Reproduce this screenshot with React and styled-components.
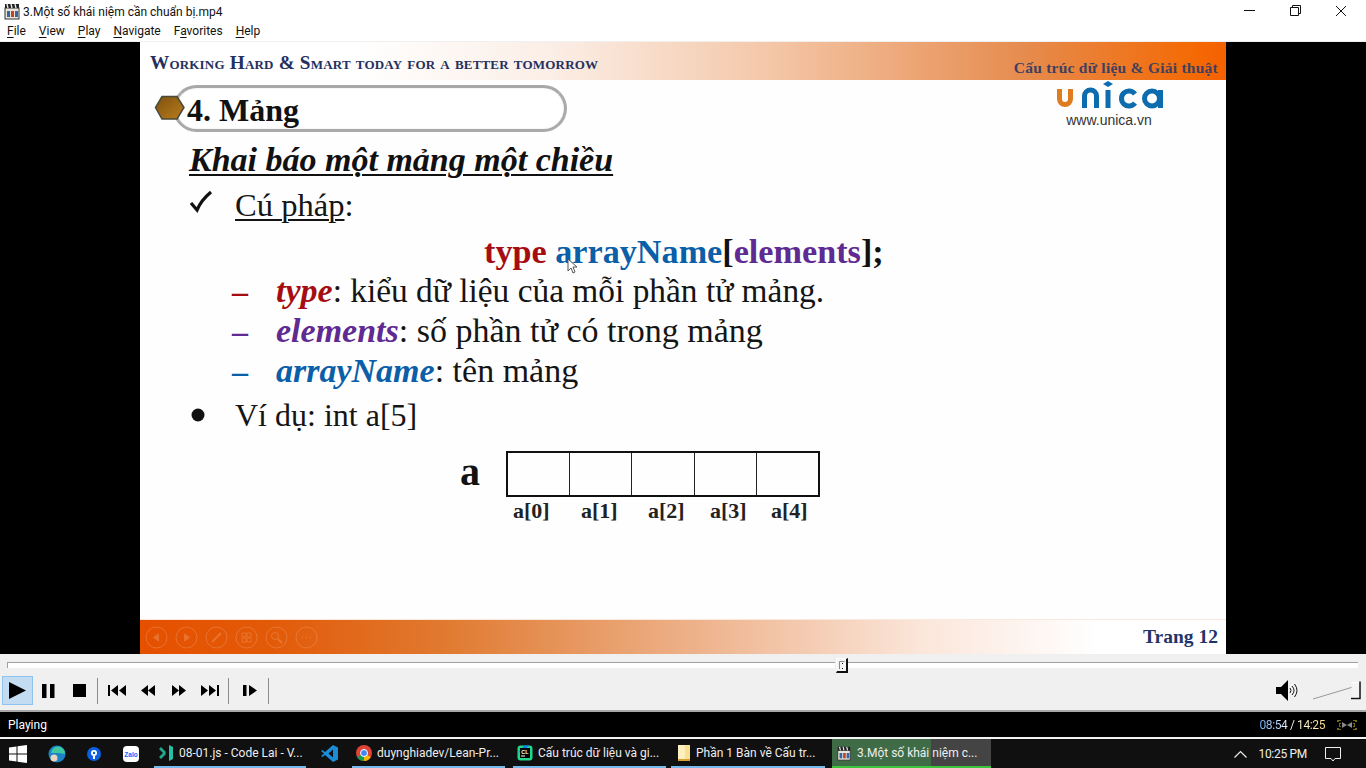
import React from 'react';
import styled, { createGlobalStyle } from 'styled-components';

const Global = createGlobalStyle`
  html, body { margin: 0; padding: 0; width: 1366px; height: 768px; overflow: hidden; background: #000; }
  #root { width: 1366px; height: 768px; }
  * { box-sizing: border-box; }
`;
const serif = `"Liberation Serif", "Times New Roman", serif`;
const ui = `Roboto, "Noto Sans", sans-serif`;

const Win = styled.div`width:1366px;height:768px;display:flex;flex-direction:column;font-family:${ui};background:#000;`;
const TitleBar = styled.div`height:22px;background:#fff;display:flex;align-items:center;padding-left:3px;font-size:12px;color:#111;`;
const TitleText = styled.span`margin-left:2px;flex:1;font-size:12px;padding-top:2px;`;
const WinBtn = styled.div`width:46px;height:21px;display:flex;align-items:center;justify-content:center;margin-right:${p=>p.$mr||0}px;`;
const MenuBar = styled.div`height:20px;background:#fff;display:flex;align-items:center;padding-left:7px;gap:13px;font-size:12px;color:#111;`;
const MenuItem = styled.span`u{text-decoration-thickness:1px;text-underline-offset:2px;}`;
const Divider = styled.div`height:1px;background:#f0f0f0;`;

const Video = styled.div`height:612px;background:#000;display:flex;justify-content:center;`;
const Slide = styled.div`width:1086px;height:612px;background:#fefefe;display:flex;flex-direction:column;position:relative;font-family:${serif};overflow:hidden;`;
const TopBand = styled.div`height:38px;flex:none;background:linear-gradient(90deg,#fff 0%,#fff 20%,#fbeee6 38%,#f4c7a8 58%,#e68a4c 82%,#f46a05 97%,#f46000 100%);display:flex;align-items:center;justify-content:space-between;padding:0 8px 0 10px;`;
const Motto = styled.div`font-size:19.2px;font-weight:700;font-variant:small-caps;color:#25305e;letter-spacing:.2px;margin-top:3px;`;
const CourseName = styled.div`font-size:15.5px;font-weight:700;color:#3f4060;margin-top:14px;letter-spacing:.25px;`;
const Body = styled.div`flex:1;display:flex;flex-direction:column;align-items:flex-start;padding:5px 0 0 49px;color:#111;`;
const Pill = styled.div`position:relative;margin-left:-16px;width:394px;height:47px;border:3px solid #aaa;border-top-color:#a8a8a8;border-radius:24px;background:#fff;display:flex;align-items:center;padding-left:11px;box-shadow:inset 0 0 2px #ddd;`;
const Hex = styled.svg`position:absolute;left:-22px;top:7px;`;
const PillTitle = styled.div`font-size:32px;font-weight:700;color:#111;margin-top:3px;`;
const Heading = styled.div`font-size:34px;font-weight:700;font-style:italic;text-decoration:underline;text-decoration-thickness:2px;text-underline-offset:3px;margin-top:6px;line-height:44px;color:#111;`;
const Row = styled.div`display:flex;align-items:center;height:${p=>p.$h||40}px;font-size:${p=>p.$fs||34}px;margin-left:${p=>p.$ml||0}px;margin-top:${p=>p.$mt||0}px;white-space:nowrap;color:#151515;`;
const Mark = styled.span`display:inline-flex;width:${p=>p.$w}px;flex:none;align-items:center;color:${p=>p.$c||'#111'};font-weight:700;font-size:32px;`;
const Under = styled.span`text-decoration:underline;text-decoration-thickness:1.5px;text-underline-offset:3px;`;
const Syntax = styled.div`align-self:flex-start;margin-left:295px;margin-top:2px;height:44px;display:flex;align-items:center;font-size:34.2px;font-weight:700;white-space:pre;color:#111;`;
const Term = styled.span`color:${p=>p.$c};font-style:${p=>p.$i?'italic':'normal'};font-weight:${p=>p.$w||700};`;
const Desc = styled.span`font-size:${p=>p.$fs||34}px;`;
const ArrayArea = styled.div`margin-top:14px;margin-left:271px;display:flex;align-items:flex-start;`;
const BigA = styled.div`font-size:40px;font-weight:700;width:46px;line-height:36px;margin-top:3px;`;
const ArrCol = styled.div`display:flex;flex-direction:column;`;
const Cells = styled.div`display:flex;width:314px;height:46px;border:2px solid #111;`;
const Cell = styled.div`flex:1;border-left:${p=>p.$first?'0':'1.5px solid #222'};`;
const Labels = styled.div`display:flex;padding-left:7px;margin-top:2px;`;
const Lbl = styled.div`font-size:22px;font-weight:700;width:${p=>p.$w}px;color:#222;line-height:24px;`;
const Logo = styled.div`position:absolute;left:916px;top:38px;width:110px;display:flex;flex-direction:column;align-items:center;`;
const Url = styled.div`font-family:"Liberation Sans",Arial,sans-serif;font-size:14px;color:#333;margin:0 4px 0 0;`;
const Cursor = styled.svg`position:absolute;left:427px;top:216px;`;
const BottomBand = styled.div`height:35px;flex:none;background:linear-gradient(90deg,#e55000 0%,#e25a08 12%,#e07a30 28%,#eeb48e 52%,#fbe6da 72%,#fff 88%);display:flex;align-items:center;justify-content:space-between;padding:0 8px 0 4px;border-top:1px solid #fbe8dc;`;
const SlideNav = styled.div`display:flex;gap:5px;opacity:.5;`;
const PageNo = styled.div`font-size:19.5px;font-weight:700;color:#1f3468;margin-bottom:0;`;

const SeekArea = styled.div`height:22px;background:#f0f0f0;position:relative;padding:8px 7px 0;flex:none;`;
const SeekTrack = styled.div`border-top:1px solid #a0a0a0;border-left:1px solid #a0a0a0;background:#fff;height:6px;margin-right:1px;`;
const Thumb = styled.div`position:absolute;left:836px;top:4px;width:12px;height:15px;background:#f4f4f4;border:1px solid #fff;border-right:2px solid #111;border-bottom:2px solid #111;box-shadow:-1px -1px 0 #eee;display:flex;align-items:center;justify-content:center;`;
const Tool = styled.div`height:34px;background:#f0f0f0;display:flex;align-items:center;padding:0 0 5px 2px;flex:none;`;
const TBtn = styled.div`width:${p=>p.$w||31}px;height:29px;display:flex;align-items:center;justify-content:center;flex:none;${p=>p.$on?'background:#c4dcf2;border:1px solid #8fc3ef;':''}`;
const Sep = styled.div`width:1px;height:26px;background:#8c8c8c;margin:0 ${p=>p.$r||0}px 0 ${p=>p.$l||0}px;flex:none;`;
const VolWrap = styled.div`margin-left:auto;display:flex;align-items:center;margin-right:5px;gap:14px;`;
const Status = styled.div`height:27px;background:#000;border-top:2px solid #a8a8a8;color:#fff;display:flex;align-items:center;padding:1px 8px 0 8px;font-size:12px;flex:none;`;
const Time = styled.span`margin-left:auto;font-size:12px;letter-spacing:-.4px;background:linear-gradient(90deg,#72b4ff,#fff 50%,#ffe08a);-webkit-background-clip:text;background-clip:text;color:transparent;`;

const Task = styled.div`height:31px;background:#101010;border-top:2px solid #f2f2f2;display:flex;align-items:stretch;position:relative;color:#eee;font-size:12px;flex:none;`;
const Icon = styled.div`width:${p=>p.$w}px;display:flex;align-items:center;justify-content:center;flex:none;`;
const TaskItem = styled.div`width:${p=>p.$w}px;margin-left:${p=>p.$ml||0}px;display:flex;align-items:center;padding-left:4px;gap:5px;border-bottom:2px solid ${p=>p.$active?'#3cc43c':'#76b9ed'};background:${p=>p.$active?'linear-gradient(90deg,#3f6b46 0,#3f6b46 99px,#444 99px)':'transparent'};white-space:nowrap;overflow:hidden;flex:none;`;
const Tray = styled.div`margin-left:auto;display:flex;align-items:center;padding-right:25px;gap:0;font-size:12px;`;
const Clock = styled.span`margin:0 18px 0 11px;letter-spacing:-.3px;`;

const Sq = ({children,w=16,h=16,...r})=><svg width={w} height={h} viewBox={`0 0 ${w} ${h}`} {...r}>{children}</svg>;

const ClapIcon = ({s=18}) => (
  <svg width={s} height={s} viewBox="0 0 18 18">
    <rect x="2" y="6" width="14" height="11" fill="#e8e4d8" stroke="#333"/>
    <path d="M2 2h14v4H2z" fill="#222"/><path d="M4 2l1 4M8 2l1 4M12 2l1 4" stroke="#eee" strokeWidth="1.3"/>
    <rect x="4" y="9" width="3" height="6" fill="#3465a4"/><rect x="8" y="9" width="3" height="6" fill="#cc4125"/><rect x="12" y="9" width="3" height="6" fill="#3465a4"/>
  </svg>
);
const NavCircle = ({children}) => (
  <svg width="25" height="25" viewBox="0 0 25 25" fill="none" stroke="#f0905a" strokeWidth="1">
    <circle cx="12.5" cy="12.5" r="10.5"/>{children}
  </svg>
);

export default function App(){
  return (
    <Win>
      <Global/>
      <TitleBar>
        <ClapIcon/>
        <TitleText>3.Một số khái niệm cần chuẩn bị.mp4</TitleText>
        <WinBtn><Sq w={11} h={11}><path d="M0 5.5h11" stroke="#111"/></Sq></WinBtn>
        <WinBtn><Sq w={11} h={11}><path d="M.5 2.5h8v8h-8zM2.5 2.5v-2h8v8h-2" fill="none" stroke="#111"/></Sq></WinBtn>
        <WinBtn $mr={2}><Sq w={12} h={12}><path d="M1 1l10 10M11 1L1 11" stroke="#111"/></Sq></WinBtn>
      </TitleBar>
      <MenuBar>
        <MenuItem><u>F</u>ile</MenuItem>
        <MenuItem><u>V</u>iew</MenuItem>
        <MenuItem><u>P</u>lay</MenuItem>
        <MenuItem><u>N</u>avigate</MenuItem>
        <MenuItem>F<u>a</u>vorites</MenuItem>
        <MenuItem><u>H</u>elp</MenuItem>
      </MenuBar>
      <Divider/>
      <Video>
        <Slide>
          <TopBand>
            <Motto>Working Hard &amp; Smart today for a better tomorrow</Motto>
            <CourseName>Cấu trúc dữ liệu &amp; Giải thuật</CourseName>
          </TopBand>
          <Body>
            <Pill>
              <Hex width="32" height="26" viewBox="0 0 32 26">
                <defs><linearGradient id="hx" x1="0" y1="0" x2="1" y2="1"><stop offset="0" stopColor="#7f5210"/><stop offset="1" stopColor="#b87c1c"/></linearGradient></defs>
                <path d="M8 1.500h15l7 11-7 11.500H8L1.500 12.500z" fill="url(#hx)" stroke="#4a4a3a" strokeWidth="1.5"/>
              </Hex>
              <PillTitle>4. Mảng</PillTitle>
            </Pill>
            <Heading>Khai báo một mảng một chiều</Heading>
            <Row $h={46} $fs={32.6}>
              <Mark $w={46}><svg width="24" height="24" viewBox="0 0 24 24" style={{marginTop:-6}}><path d="M2 13l6 7C11 13 16 7 22 2" fill="none" stroke="#111" strokeWidth="3.200"/></svg></Mark>
              <span><Under>Cú pháp</Under>:</span>
            </Row>
            <Syntax>
              <Term $c="#a50d12">type </Term><Term $c="#0b5ea8">arrayName</Term>[<Term $c="#5f2a91">elements</Term>];
            </Syntax>
            <Row $ml={43} $mt={-3}>
              <Mark $w={44} $c="#a50d12">–</Mark>
              <span><Term $c="#a50d12" $i>type</Term><Desc $fs={33.4}>: kiểu dữ liệu của mỗi phần tử mảng.</Desc></span>
            </Row>
            <Row $ml={43}>
              <Mark $w={44} $c="#5f2a91">–</Mark>
              <span><Term $c="#5f2a91" $i>elements</Term>: số phần tử có trong mảng</span>
            </Row>
            <Row $ml={43}>
              <Mark $w={44} $c="#0b5ea8">–</Mark>
              <span><Term $c="#0b5ea8" $i>arrayName</Term>: tên mảng</span>
            </Row>
            <Row $h={44} $mt={2} $fs={32}>
              <Mark $w={46}><svg width="16" height="16" viewBox="0 0 16 16"><circle cx="9" cy="8" r="6.500" fill="#111"/></svg></Mark>
              <span>Ví dụ: int a[5]</span>
            </Row>
            <ArrayArea>
              <BigA>a</BigA>
              <ArrCol>
                <Cells>
                  <Cell $first/><Cell/><Cell/><Cell/><Cell/>
                </Cells>
                <Labels>
                  <Lbl $w={68}>a[0]</Lbl><Lbl $w={67}>a[1]</Lbl><Lbl $w={62}>a[2]</Lbl><Lbl $w={61}>a[3]</Lbl><Lbl $w={40}>a[4]</Lbl>
                </Labels>
              </ArrCol>
            </ArrayArea>
          </Body>
          <BottomBand>
            <SlideNav>
              <NavCircle><path d="M14.500 9v7l-5-3.500z" fill="#f0905a"/></NavCircle>
              <NavCircle><path d="M10.500 9v7l5-3.500z" fill="#f0905a"/></NavCircle>
              <NavCircle><path d="M8 17l9-9" strokeWidth="2"/></NavCircle>
              <NavCircle><path d="M8 8h4v4H8zM13 8h4v4h-4zM8 13h4v4H8zM13 13h4v4h-4z"/></NavCircle>
              <NavCircle><circle cx="11" cy="11" r="3.500"/><path d="M14 14l4 4" strokeWidth="2"/></NavCircle>
              <NavCircle><path d="M8 12.500h1M12 12.500h1M16 12.500h1" strokeWidth="1.500"/></NavCircle>
            </SlideNav>
            <PageNo>Trang 12</PageNo>
          </BottomBand>
          <Logo>
            <svg width="110" height="32" viewBox="0 0 110 32" fill="none" strokeWidth="5">
              <path d="M3.500 9v10a5.500 5.500 0 0 0 11 0V9" stroke="#df7c20"/>
              <path d="M28.500 28V16a6 6 0 0 1 12 0v12" stroke="#0c6cae"/>
              <path d="M52 10v18" stroke="#0c6cae"/>
              <path d="M47 4l5-3 5 3-5 3z" fill="#0c6cae" stroke="none"/>
              <path d="M79 14a7.500 7.500 0 1 0 0 9" stroke="#0c6cae"/>
              <circle cx="96" cy="18.500" r="7.500" stroke="#0c6cae"/><path d="M104.500 10v18" stroke="#0c6cae"/>
            </svg>
            <Url>www.unica.vn</Url>
          </Logo>
          <Cursor width="12" height="17" viewBox="0 0 12 17"><path d="M1 1v12l3-3 2 5 2-1-2-5h4z" fill="#fff" stroke="#555"/></Cursor>
        </Slide>
      </Video>
      <SeekArea><SeekTrack/><Thumb><Sq w={6} h={9}><path d="M.5 8V.5h5" fill="none" stroke="#888"/><rect x="3" y="2" width="1" height="1" fill="#111"/><rect x="3" y="7" width="1" height="1" fill="#111"/></Sq></Thumb></SeekArea>
      <Tool>
        <TBtn $on><Sq w={18} h={17} style={{marginLeft:1}}><path d="M0 0l17 8.500L0 17z" fill="#000"/></Sq></TBtn>
        <TBtn><Sq w={13} h={14}><path d="M0 0h4.500v14H0zM8 0h4.500v14H8z" fill="#000"/></Sq></TBtn>
        <TBtn><Sq w={13} h={13}><rect width="13" height="13" fill="#000"/></Sq></TBtn>
        <Sep $l={2} $r={3}/>
        <TBtn><Sq w={18} h={11}><path d="M0 0h2v11H0zM10 0v11L3 5.500zM18 0v11l-7-5.500z" fill="#000"/></Sq></TBtn>
        <TBtn><Sq w={14} h={11}><path d="M7 0v11L0 5.500zM14 0v11L7 5.500z" fill="#000"/></Sq></TBtn>
        <TBtn><Sq w={14} h={11}><path d="M0 0v11l7-5.500zM7 0v11l7-5.500z" fill="#000"/></Sq></TBtn>
        <TBtn><Sq w={18} h={11}><path d="M0 0v11l7-5.500zM8 0v11l7-5.500zM16 0h2v11h-2z" fill="#000"/></Sq></TBtn>
        <Sep $l={3} $r={5}/>
        <TBtn><Sq w={14} h={11}><path d="M0 0h3.500v11H0zM6 0v11l8-5.500z" fill="#000"/></Sq></TBtn>
        <Sep $l={3} $r={0}/>
        <VolWrap>
          <Sq w={23} h={21}><path d="M0 7h5L12 0v21L5 14H0z" fill="#000"/><path d="M14 8q2 2.500 0 5M16 6q4 4.500 0 9M18.500 4q5 6.500 0 13" fill="none" stroke="#111" strokeWidth="1"/></Sq>
          <Sq w={48} h={20}><path d="M0 18L40 6" stroke="#999"/><path d="M40 18h8" stroke="#fff"/><path d="M38.500 1.500h8v15h-8" fill="#f4f4f4" stroke="#fff"/><path d="M47 .5v17h-9" fill="none" stroke="#111" strokeWidth="1.500"/></Sq>
        </VolWrap>
      </Tool>
      <Status>
        <span>Playing</span>
        <Time>08:54 / 14:25</Time>
        <Sq w={22} h={12} style={{marginLeft:11}}><path d="M6 3l5 3-5 3zM16 3l-5 3 5 3z" fill="#888"/><path d="M1 2h2M3 6h1M1 10h2M19 2h2M18 6h1M19 10h2" stroke="#e8d820"/><path d="M4 1v10M18 1v10" stroke="#e8d820" strokeDasharray="1 2"/></Sq>
      </Status>
      <Task>
        <Icon $w={35}><Sq w={18} h={18}><path d="M0 2.500l7.500-1v7H0zM8.500 1.300L18 0v8.500H8.500zM0 9.500h7.500v7l-7.500-1zM8.500 9.500H18V18l-9.500-1.300z" fill="#fff"/></Sq></Icon>
        <Icon $w={44}><Sq w={18} h={18}><circle cx="9" cy="9" r="8.500" fill="#1c84c6"/><path d="M3 8a7 7 0 0 1 14 1l-6-1z" fill="#3fc7a0"/><circle cx="6" cy="13" r="3.500" fill="#e9d4c0"/></Sq></Icon>
        <Icon $w={30}><Sq w={14} h={14}><circle cx="7" cy="7" r="7" fill="#0b5fe0"/><circle cx="7" cy="6" r="3" fill="#fff"/><circle cx="7" cy="6" r="1.200" fill="#0b5fe0"/><path d="M6 9h2v3H6z" fill="#fff"/></Sq></Icon>
        <Icon $w={44}><Sq w={16} h={16}><rect width="16" height="16" rx="4" fill="#fff"/><text x="8" y="10.500" fontSize="6.500" fontWeight="700" textAnchor="middle" fill="#0a68ff" fontFamily="Liberation Sans">Zalo</text></Sq></Icon>
        <TaskItem $w={152} $ml={1}>
          <Sq w={16} h={16}><path d="M1 4l4 4-4 4 2 2 5-5V7L3 2z" fill="#23a78d"/><path d="M11 0l4 2v12l-4 2z" fill="#27c0a2"/><path d="M11 5L7 8l4 3z" fill="#101010"/></Sq>
          <span>08-01.js - Code Lai - V...</span>
        </TaskItem>
        <Icon $w={46}><Sq w={17} h={17}><path d="M12 0l5 2.500v12L12 17 4 10l-2.500 2L0 11l3-2.500L0 6l1.500-1L4 7z" fill="#1a8cd8"/><path d="M12 4.500L7.500 8.500l4.500 4z" fill="#101010"/></Sq></Icon>
        <TaskItem $w={153}>
          <Sq w={16} h={16}><circle cx="8" cy="8" r="8" fill="#db4437"/><path d="M8 8L1.200 12.200A8 8 0 0 0 8 16z" fill="#0f9d58"/><path d="M8 8l6.800 4A8 8 0 0 1 8 16z" fill="#f4b400"/><circle cx="8" cy="8" r="3.500" fill="#4285f4" stroke="#fff"/></Sq>
          <span>duynghiadev/Lean-Pr...</span>
        </TaskItem>
        <TaskItem $w={153} $ml={8}>
          <Sq w={16} h={16}><rect x=".5" y=".5" width="15" height="15" rx="3" fill="#21d789"/><path d="M.5 8l7-7.500H13z" fill="#087cfa"/><rect x="3" y="3" width="10" height="10" fill="#000"/><text x="8" y="8.500" fontSize="5.500" fontWeight="700" textAnchor="middle" fill="#fff" fontFamily="Liberation Sans">CL</text><path d="M4 11h4" stroke="#fff"/></Sq>
          <span>Cấu trúc dữ liệu và gi...</span>
        </TaskItem>
        <TaskItem $w={154} $ml={5}>
          <Sq w={14} h={18} style={{marginLeft:2}}><rect x="1" y="1" width="12" height="15" fill="#fbe08e"/><path d="M1 1h7v15H1z" fill="#fdf0c0"/><path d="M1 16h12" stroke="#d8a030" strokeWidth="2"/></Sq>
          <span>Phần 1 Bàn về Cấu tr...</span>
        </TaskItem>
        <TaskItem $w={159} $ml={7} $active>
          <ClapIcon s={16}/>
          <span>3.Một số khái niệm c...</span>
        </TaskItem>
        <Tray>
          <Sq w={13} h={8}><path d="M.5 7.500L6.500 1.500l6 6" fill="none" stroke="#eee" strokeWidth="1.200"/></Sq>
          <Clock>10:25 PM</Clock>
          <Sq w={16} h={16}><path d="M.5 1.500h15v11H10l-2 2.500-2-2.500H.5z" fill="none" stroke="#eee"/></Sq>
        </Tray>
      </Task>
    </Win>
  );
}
